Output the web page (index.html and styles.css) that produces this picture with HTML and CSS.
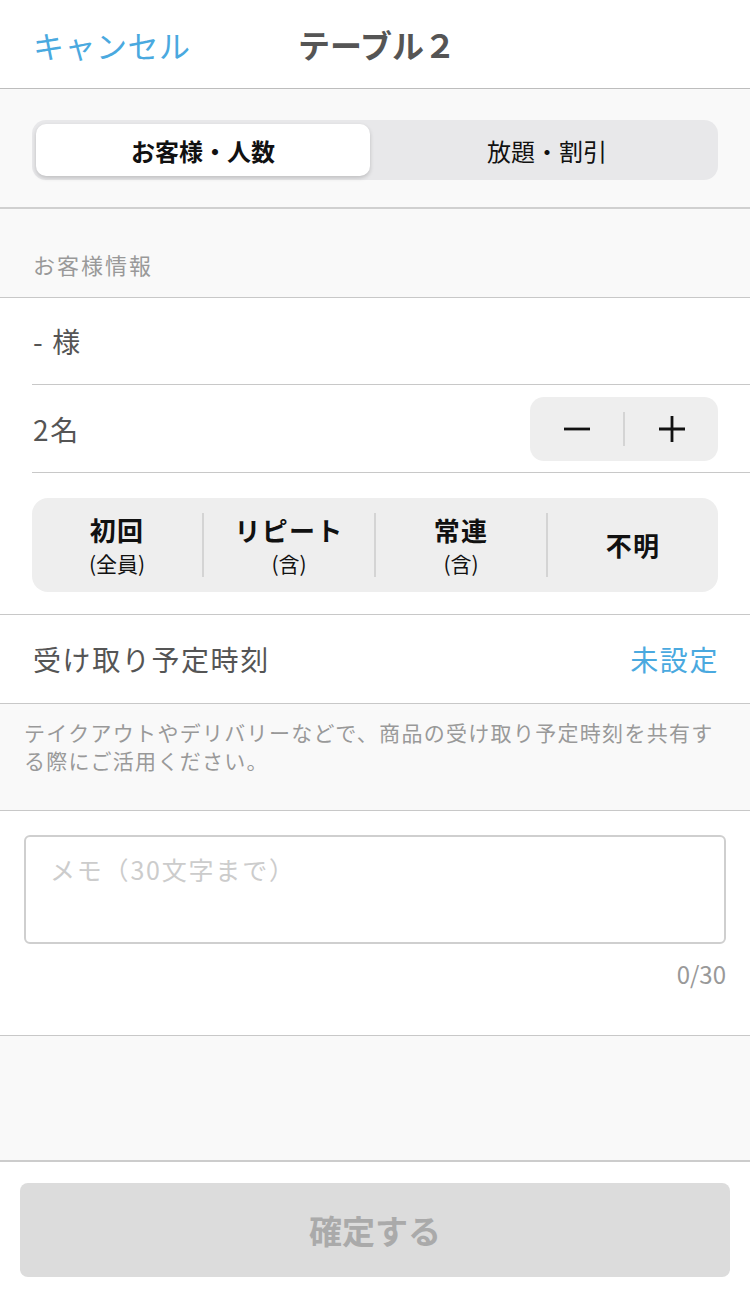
FILE: index.html
```html
<!DOCTYPE html>
<html lang="ja">
<head>
<meta charset="utf-8">
<link rel="stylesheet" href="styles.css">
</head>
<body>
<div class="page">
  <header class="header">
    <span class="cancel">キャンセル</span>
    <span class="title">テーブル２</span>
  </header>

  <section class="tabs-section">
    <div class="tabs">
      <div class="tab active">お客様・人数</div>
      <div class="tab other">放題・割引</div>
    </div>
  </section>

  <section class="label-section">
    <span class="section-label">お客様情報</span>
  </section>

  <section class="customer">
    <div class="row name-row"><span class="row-text">- 様</span></div>
    <div class="row count-row">
      <span class="row-text">2名</span>
      <div class="stepper">
        <span class="step minus"><svg width="28" height="28" viewBox="0 0 28 28"><path d="M1 14H27" stroke="#111" stroke-width="2.8"/></svg></span>
        <span class="step-sep"></span>
        <span class="step plus"><svg width="28" height="28" viewBox="0 0 28 28"><path d="M1 14H27M14 1V27" stroke="#111" stroke-width="2.8"/></svg></span>
      </div>
    </div>
    <div class="types-wrap">
      <div class="types">
        <div class="type"><span class="type-main">初回</span><span class="type-sub">(全員)</span></div>
        <div class="type-sep"></div>
        <div class="type"><span class="type-main">リピート</span><span class="type-sub">(含)</span></div>
        <div class="type-sep"></div>
        <div class="type"><span class="type-main">常連</span><span class="type-sub">(含)</span></div>
        <div class="type-sep"></div>
        <div class="type"><span class="type-main">不明</span></div>
      </div>
    </div>
  </section>

  <section class="pickup">
    <span class="row-text">受け取り予定時刻</span>
    <span class="unset">未設定</span>
  </section>

  <section class="note">
    <p>テイクアウトやデリバリーなどで、商品の受け取り予定時刻を共有する際にご活用ください。</p>
  </section>

  <section class="memo">
    <div class="memo-box"><span class="placeholder">メモ（30文字まで）</span></div>
    <div class="counter">0/30</div>
  </section>

  <section class="spacer"></section>

  <footer class="footer">
    <div class="confirm">確定する</div>
  </footer>
</div>
</body>
</html>
```

FILE: styles.css
```css
* { box-sizing: border-box; }
html, body { margin: 0; padding: 0; }
body {
  font-family: "Noto Sans CJK JP", "Noto Sans", sans-serif;
  background: #f9f9f9;
  color: #555;
}
.page { width: 750px; height: 1294px; display: flex; flex-direction: column; overflow: hidden; }

.header {
  height: 89px;
  background: #fff;
  border-bottom: 1px solid #bdbdbd;
  position: relative;
  display: flex;
  align-items: center;
  padding-left: 33px;
}
.cancel { color: #4aa9df; font-size: 31px; line-height: 1; letter-spacing: 0.5px; }
.title {
  position: absolute;
  left: 0; right: 0;
  text-align: center;
  font-size: 32px;
  font-weight: 700;
  color: #555;
  line-height: 1;
  padding-left: 4px;
  pointer-events: none;
}

.tabs-section {
  height: 120px;
  border-bottom: 2px solid #d0d0d0;
  padding: 31px 32px 0;
}
.tabs {
  height: 60px;
  background: #e8e8ea;
  border-radius: 14px;
  display: flex;
  padding: 4px;
}
.tab {
  flex: 1;
  display: flex;
  align-items: center;
  justify-content: center;
  font-size: 24px;
  color: #111;
  border-radius: 10px;
}
.tab.other { padding-left: 10px; }
.tab.active {
  flex: 0 0 334px;
  background: #fff;
  font-weight: 700;
  box-shadow: 0 2px 4px rgba(0,0,0,0.18);
}

.label-section {
  height: 89px;
  border-bottom: 1px solid #c8c8c8;
  padding: 44px 33px 0;
}
.section-label { font-size: 22px; color: #999; line-height: 1; letter-spacing: 2px; }

.customer { background: #fff; border-bottom: 1px solid #c8c8c8; padding-left: 32px; }
.row {
  height: 88px;
  border-bottom: 1px solid #c8c8c8;
  display: flex;
  align-items: center;
  justify-content: space-between;
  padding-right: 32px;
}
.name-row { height: 87px; }
.row-text { font-size: 28px; color: #555; line-height: 1; padding-left: 1px; letter-spacing: 1.6px; }
.stepper {
  width: 188px;
  height: 64px;
  background: #eee;
  border-radius: 14px;
  display: flex;
  align-items: center;
}
.step { flex: 1; display: flex; justify-content: center; align-items: center; }
.step-sep { width: 2px; height: 34px; background: #d4d4d4; }

.types-wrap { padding: 25px 32px 22px 0; }
.types {
  height: 94px;
  background: #eee;
  border-radius: 16px;
  display: flex;
  align-items: center;
}
.type {
  flex: 1;
  display: flex;
  flex-direction: column;
  align-items: center;
  justify-content: center;
  gap: 6px;
  color: #111;
}
.type-main { font-size: 26px; font-weight: 700; line-height: 30px; letter-spacing: 1.2px; }
.type-sub { font-size: 21px; line-height: 24px; }
.type-sep { width: 2px; height: 64px; background: #d4d4d4; }

.pickup {
  height: 89px;
  background: #fff;
  border-bottom: 1px solid #c8c8c8;
  display: flex;
  align-items: center;
  justify-content: space-between;
  padding: 0 32px 0 32px;
}
.unset { color: #4aa9df; font-size: 28px; line-height: 1; letter-spacing: 1.6px; margin-right: -1px; }

.note {
  height: 107px;
  border-bottom: 1px solid #c8c8c8;
  padding: 14px 24px 0;
}
.note p { margin: 0; font-size: 21px; line-height: 28px; color: #999; letter-spacing: 1.3px; }

.memo {
  height: 225px;
  background: #fff;
  border-bottom: 1px solid #c8c8c8;
  padding: 24px 24px 0;
}
.memo-box {
  height: 109px;
  border: 2px solid #cfcfcf;
  border-radius: 6px;
  padding: 20px 24px;
}
.placeholder { font-size: 25px; color: #ccc; line-height: 1; letter-spacing: 1.8px; }
.counter { text-align: right; font-size: 24px; color: #999; margin-top: 18px; line-height: 1; }

.spacer { height: 126px; border-bottom: 2px solid #cccccc; }

.footer {
  flex: 1;
  background: #fff;
  padding: 21px 20px 0;
}
.confirm {
  height: 94px;
  background: #dcdcdc;
  border-radius: 8px;
  display: flex;
  align-items: center;
  justify-content: center;
  font-size: 33px;
  font-weight: 700;
  color: #aaa;
}
```
